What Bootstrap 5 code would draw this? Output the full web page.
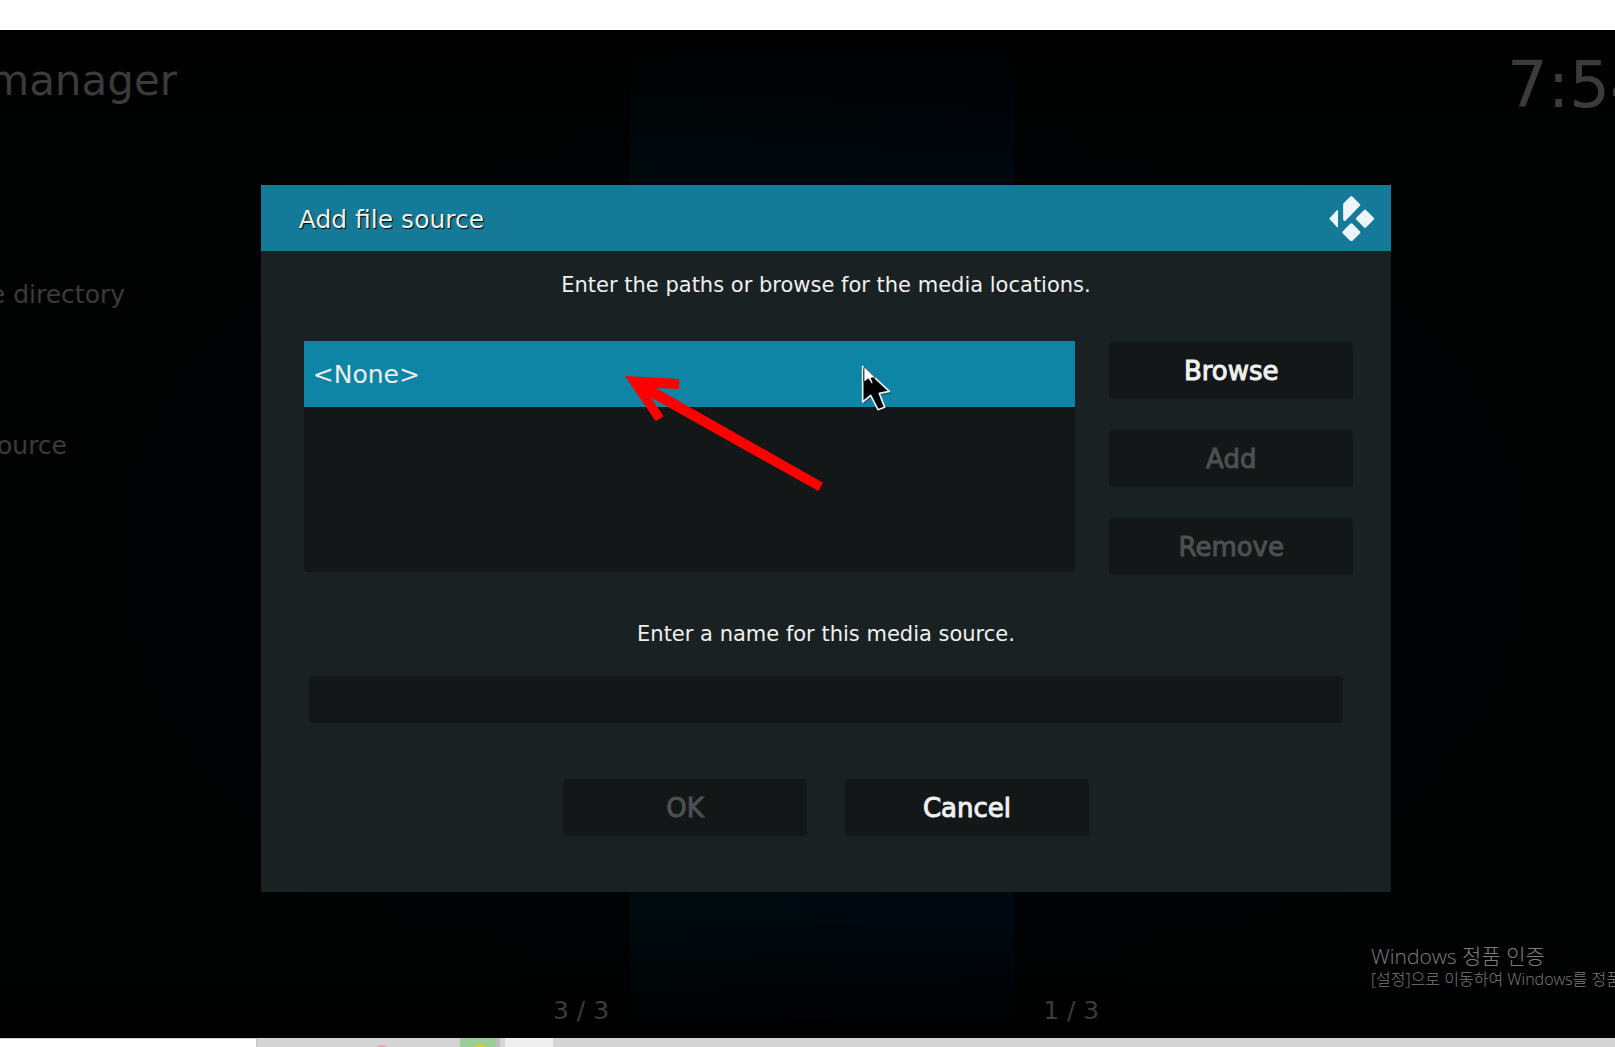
<!DOCTYPE html>
<html lang="en">
<head>
<meta charset="utf-8">
<meta name="viewport" content="width=device-width, initial-scale=1">
<title>Add file source</title>
<link href="https://cdn.jsdelivr.net/npm/bootstrap@5.3.0/dist/css/bootstrap.min.css" rel="stylesheet">
<style>
  body { font-family: "DejaVu Sans", sans-serif; font-size: 25px; line-height: 30px; background: #fff; }
  .top-band { height: 30px; }
  .screen {
    background:
      linear-gradient(180deg, #000 0%, transparent 16%, transparent 88%, #000 100%),
      linear-gradient(90deg, transparent 39%, #000b0f 39%, #000810 62.8%, transparent 62.8%),
      radial-gradient(ellipse 46% 48% at 51% 52%, #010206 60%, #010303 100%);
    color: #3b3b3b;
  }
  .window-title { font-size: 42px; line-height: 50px; width: 177px; margin-top: 10px; }
  .clock { font-size: 64px; line-height: 78px; width: 108px; }
  .side-list { padding-top: 156px; gap: 121px; }
  .side-item-a { width: 125px; }
  .side-item-b { width: 67px; }
  .counters { padding: 0 0 12px 553px; gap: 434px; }
  .activation { font-family: "Open Sans", "Noto Sans CJK KR", sans-serif; color: #7d7d7d; width: 244px; margin-bottom: 6px; font-weight: 300; }
  .act-head { font-size: 21px; line-height: 24px; }
  .act-text { font-size: 16px; line-height: 22px; }
  .overlay { padding: 155px 0 0 37px; }
  .dlg { width: 70vw; background: #1a2122; color: #f0f0f0; }
  .dlg-head { height: 66px; padding: 0 17px 0 38px; background: #157a97; }
  .dlg-title { font-size: 25px; line-height: 30px; padding-top: 3px; text-shadow: 1px 1px 1px #000; font-weight: 400; }
  .dlg-label { font-size: 21px; line-height: 30px; }
  .paths-label { padding-top: 19px; margin-bottom: 41px; }
  .paths { padding: 0 38px 0 43px; gap: 34px; }
  .path-list { height: 231px; background: #131718; border-radius: 4px; }
  .path-item { height: 66px; padding: 2px 9px 0; background: #0f85a5; color: #ececec; border: 0; }
  .side-buttons { padding-top: 1px; gap: 31px; }
  .kbtn, .kbtn:disabled { width: 244px; height: 57px; padding: 0; font-size: 26px; line-height: 30px; border: 0; border-radius: 4px; background: #131718; color: #f0f0f0; -webkit-text-stroke: 1px currentColor; }
  .kbtn:disabled { color: #4d4f50; opacity: 1; }
  .kbtn:hover { background: #0f85a5; color: #fff; }
  .name-label { margin: 44px 0 27px; }
  .name-row { padding: 0 48px; }
  .name-box, .name-box:focus { height: 47px; border: 0; border-radius: 4px; background: #131718; color: #f0f0f0; box-shadow: none; }
  .dlg-foot { padding: 56px 0 56px; gap: 38px; }
  .pointer-art { left: 306px; top: 9px; pointer-events: none; }
  .desk { height: 9px; background: #d4d4d4; }
  .desk-white { width: 257px; background: #fff; border-top: 1px solid #ccc; border-right: 1px solid #c4c4c4; }
  .desk-gap { width: 203px; }
  .desk-green { width: 36px; background: #9bce95; }
  .desk-shade { width: 4px; background: #bdbdbd; }
  .desk-light { width: 48px; margin-left: 5px; background: #eee; }
</style>
<script src="https://cdn.jsdelivr.net/npm/bootstrap@5.3.0/dist/js/bootstrap.bundle.min.js"></script>
</head>
<body class="d-flex flex-column min-vh-100 overflow-hidden">
<div class="top-band flex-shrink-0"></div>
<main class="screen position-relative flex-grow-1 d-flex flex-column overflow-hidden">
  <header class="d-flex justify-content-between align-items-start pt-3 overflow-hidden">
    <div class="window-title d-flex justify-content-end overflow-hidden">manager</div>
    <div class="clock text-nowrap overflow-hidden">7:54</div>
  </header>
  <div class="side-list d-flex flex-column">
    <div class="side-item-a d-flex justify-content-end overflow-hidden text-nowrap">e directory</div>
    <div class="side-item-b d-flex justify-content-end overflow-hidden">ource</div>
  </div>
  <div class="activation mt-auto ms-auto overflow-hidden text-nowrap" lang="ko">
    <div class="act-head">Windows 정품 인증</div>
    <div class="act-text">[설정]으로 이동하여 Windows를 정품</div>
  </div>
  <footer class="counters d-flex"><span>3 / 3</span><span>1 / 3</span></footer>

  <div class="overlay position-absolute top-0 start-0 w-100 d-flex justify-content-center">
    <section class="dlg" role="dialog" aria-labelledby="dlgTitle">
      <div class="dlg-head d-flex align-items-center justify-content-between">
        <h1 class="dlg-title m-0" id="dlgTitle">Add file source</h1>
        <svg width="45" height="45" viewBox="0 0 135 135" fill="#edf5f8" stroke="#edf5f8" stroke-linejoin="round" aria-hidden="true">
          <path d="M3 68 25 44V92Z" stroke-width="4"/>
          <path d="M67 5 89 27 47 70V25Z" stroke-width="9"/>
          <path d="M108 46 130 68 108 90 86 68Z" stroke-width="10"/>
          <path d="M67 87 89 109 67 131 45 109Z" stroke-width="10"/>
        </svg>
      </div>
      <div class="dlg-label paths-label text-center" id="pathsLabel">Enter the paths or browse for the media locations.</div>
      <div class="paths d-flex align-items-start">
        <div class="path-list list-group position-relative flex-grow-1 rounded-top-0" aria-labelledby="pathsLabel">
          <button type="button" class="path-item w-100 text-start">&lt;None&gt;</button>
          <svg class="pointer-art position-absolute" width="300" height="150" viewBox="0 0 900 450" aria-hidden="true">
            <path fill="#f00" d="M45 78 208 87 207 117 138 114 639 398 625 423 122 142 161 199 137 214Z"/>
            <g stroke-linejoin="round">
              <path d="M762 54V162L786 142 808 184 828 177 812 136 844 131Z" fill="#003" opacity=".3"/>
              <path d="M758 49V156L782 136 804 179 824 172 808 130 838 124Z" fill="#000" stroke="#eee" stroke-width="5"/>
              <path d="M762 50V96L775 86 785 101 789 99 783 84 796 83Z" fill="#fff" stroke="#000" stroke-width="2"/>
            </g>
          </svg>
        </div>
        <div class="side-buttons d-flex flex-column">
          <button type="button" class="btn kbtn">Browse</button>
          <button type="button" class="btn kbtn" disabled>Add</button>
          <button type="button" class="btn kbtn" disabled>Remove</button>
        </div>
      </div>
      <label class="dlg-label name-label d-block text-center" for="sourceName">Enter a name for this media source.</label>
      <div class="name-row"><input type="text" class="form-control name-box" id="sourceName"></div>
      <div class="dlg-foot d-flex justify-content-center">
        <button type="button" class="btn kbtn" disabled>OK</button>
        <button type="button" class="btn kbtn">Cancel</button>
      </div>
    </section>
  </div>
</main>
<div class="desk d-flex flex-shrink-0">
  <div class="desk-white"></div>
  <div class="desk-gap"><svg class="d-block" width="203" height="9"><circle cx="125" cy="16" r="9" fill="#e3aaa8"/></svg></div>
  <div class="desk-green"><svg class="d-block" width="36" height="9"><circle cx="20" cy="17" r="10" fill="#e8cf1c"/></svg></div>
  <div class="desk-shade"></div>
  <div class="desk-light"></div>
</div>
</body>
</html>
